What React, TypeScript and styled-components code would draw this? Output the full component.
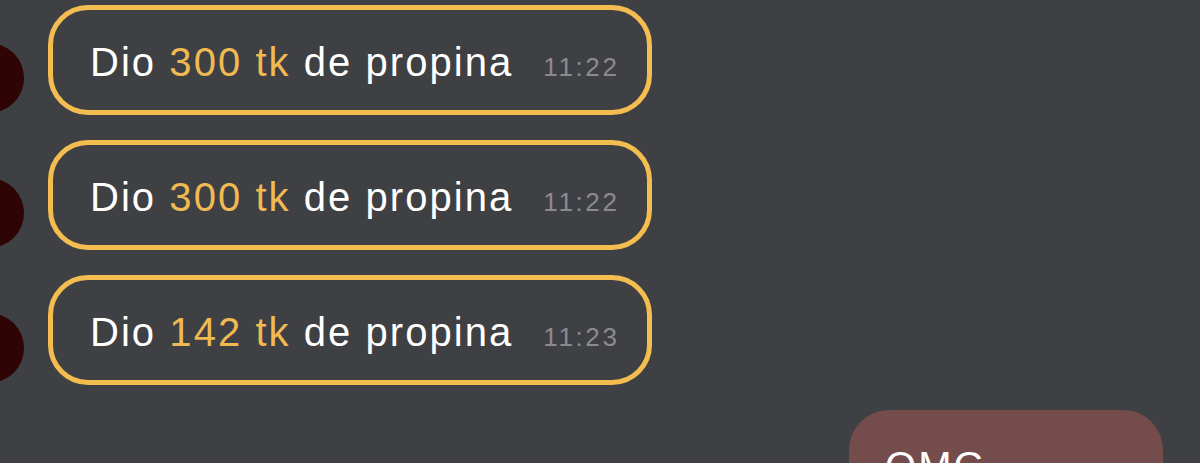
import styled, { createGlobalStyle } from 'styled-components';

// ====

const GlobalStyle = createGlobalStyle`
  html, body {
    margin: 0;
    padding: 0;
    background: #3f4044;
    overflow: hidden;
  }
`;

const Root = styled.div`
  width: 1200px;
  height: 463px;
  overflow: hidden;
  background: #3f4044;
  font-family: "Liberation Sans", Arial, Helvetica, sans-serif;
  display: flex;
  flex-direction: column;
  gap: 25px;
  padding-top: 5px;
  box-sizing: border-box;
`;

const Row = styled.div`
  display: flex;
  align-items: flex-end;
  gap: 24px;
`;

const Avatar = styled.div`
  width: 70px;
  height: 70px;
  flex: none;
  margin-left: -46px;
  margin-bottom: 2px;
  border-radius: 50%;
  background: #2f0404;
`;

const TipBubble = styled.div`
  box-sizing: border-box;
  height: 110px;
  padding: 32px 28px 28px 37px;
  border: 5px solid #f3bd4f;
  border-radius: 40px;
  display: flex;
  align-items: baseline;
  gap: 30px;
`;

const Message = styled.span`
  font-size: 40px;
  line-height: 40px;
  letter-spacing: 2.05px;
  color: #ffffff;
  white-space: nowrap;
`;

const Amount = styled.span`
  color: #f0ba52;
`;

const Time = styled.span`
  font-size: 26px;
  letter-spacing: 2.6px;
  color: #8b8b8f;
  white-space: nowrap;
`;

const OutRow = styled.div`
  display: flex;
  justify-content: flex-end;
  padding-right: 37px;
`;

const OutBubble = styled.div`
  box-sizing: border-box;
  width: 314px;
  height: 120px;
  padding: 36px 36px;
  border-radius: 40px;
  background: #744c4b;
`;

const tips = [
  { amount: 300, time: '11:22' },
  { amount: 300, time: '11:22' },
  { amount: 142, time: '11:23' },
];

const App = () => (
  <Root>
    <GlobalStyle />
    {tips.map((tip, i) => (
      <Row key={i}>
        <Avatar />
        <TipBubble>
          <Message>
            {'Dio '}
            <Amount>{`${tip.amount} tk`}</Amount>
            {' de propina'}
          </Message>
          <Time>{tip.time}</Time>
        </TipBubble>
      </Row>
    ))}
    <OutRow>
      <OutBubble>
        <Message>OMG</Message>
      </OutBubble>
    </OutRow>
  </Root>
);

export default App;
